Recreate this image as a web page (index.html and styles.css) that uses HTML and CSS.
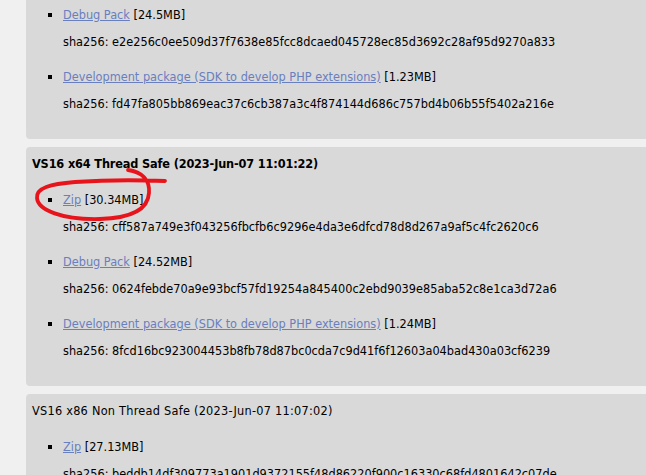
FILE: index.html
```html
<!DOCTYPE html>
<html>
<head>
<meta charset="utf-8">
<link rel="stylesheet" href="styles.css">
</head>
<body>
<div class="page">
  <div class="panel panel-cut">
    <ul class="files">
      <li>
        <div class="line"><a href="#">Debug Pack</a> [24.5MB]</div>
        <p class="sha">sha256: e2e256c0ee509d37f7638e85fcc8dcaed045728ec85d3692c28af95d9270a833</p>
      </li>
      <li>
        <div class="line"><a href="#">Development package (SDK to develop PHP extensions)</a> [1.23MB]</div>
        <p class="sha">sha256: fd47fa805bb869eac37c6cb387a3c4f874144d686c757bd4b06b55f5402a216e</p>
      </li>
    </ul>
  </div>

  <div class="panel">
    <h3 class="title bold">VS16 x64 Thread Safe (2023-Jun-07 11:01:22)</h3>
    <ul class="files">
      <li>
        <div class="line"><a href="#">Zip</a> [30.34MB]</div>
        <p class="sha">sha256: cff587a749e3f043256fbcfb6c9296e4da3e6dfcd78d8d267a9af5c4fc2620c6</p>
      </li>
      <li>
        <div class="line"><a href="#">Debug Pack</a> [24.52MB]</div>
        <p class="sha">sha256: 0624febde70a9e93bcf57fd19254a845400c2ebd9039e85aba52c8e1ca3d72a6</p>
      </li>
      <li>
        <div class="line"><a href="#">Development package (SDK to develop PHP extensions)</a> [1.24MB]</div>
        <p class="sha">sha256: 8fcd16bc923004453b8fb78d87bc0cda7c9d41f6f12603a04bad430a03cf6239</p>
      </li>
    </ul>
  </div>

  <div class="panel">
    <h3 class="title">VS16 x86 Non Thread Safe (2023-Jun-07 11:07:02)</h3>
    <ul class="files">
      <li>
        <div class="line"><a href="#">Zip</a> [27.13MB]</div>
        <p class="sha">sha256: beddb14df309773a1901d9372155f48d86220f900c16330c68fd4801642c07de</p>
      </li>
    </ul>
  </div>

  <svg class="annotation" width="646" height="475" viewBox="0 0 646 475">
    <path d="M128 170 C 142 172, 150 180, 149 193 C 148 208, 135 218, 100 219 C 62 220, 38 210, 37 198 C 36 188, 50 184, 75 182 C 105 180, 140 180, 165 181"
      fill="none" stroke="#e8141b" stroke-width="3.8" stroke-linecap="round" stroke-linejoin="round"/>
  </svg>
</div>
</body>
</html>
```

FILE: styles.css
```css
html, body {
  margin: 0;
  padding: 0;
  background: #f0f0f0;
}
body {
  font-family: "DejaVu Sans Condensed", "DejaVu Sans", sans-serif;
  font-size: 12.6px;
  line-height: 16px;
  color: #000;
  height: 475px;
  overflow: hidden;
}
.page {
  position: relative;
  padding-left: 26px;
}
.panel {
  background: #d9d9d9;
  border-radius: 4px 0 0 4px;
  padding: 9px 0 8px 6px;
  margin-bottom: 8px;
}
.panel-cut {
  border-top-left-radius: 0;
  padding-top: 7px;
}
.title {
  margin: 0 0 20px 0;
  font-size: 12.6px;
  line-height: 16px;
  font-weight: normal;
  letter-spacing: 0.25px;
}
.title.bold {
  font-weight: bold;
  letter-spacing: -0.15px;
}
.files {
  margin: 0;
  padding: 0 0 0 31px;
  list-style: square;
}
.files li {
  margin-bottom: 19px;
}
.line {
  height: 16px;
}
.files a {
  color: #6a7fbf;
  text-decoration: underline;
}
.sha {
  margin: 11px 0 0 0;
  white-space: nowrap;
}
.annotation {
  position: absolute;
  left: 0;
  top: 0;
  pointer-events: none;
}
```
